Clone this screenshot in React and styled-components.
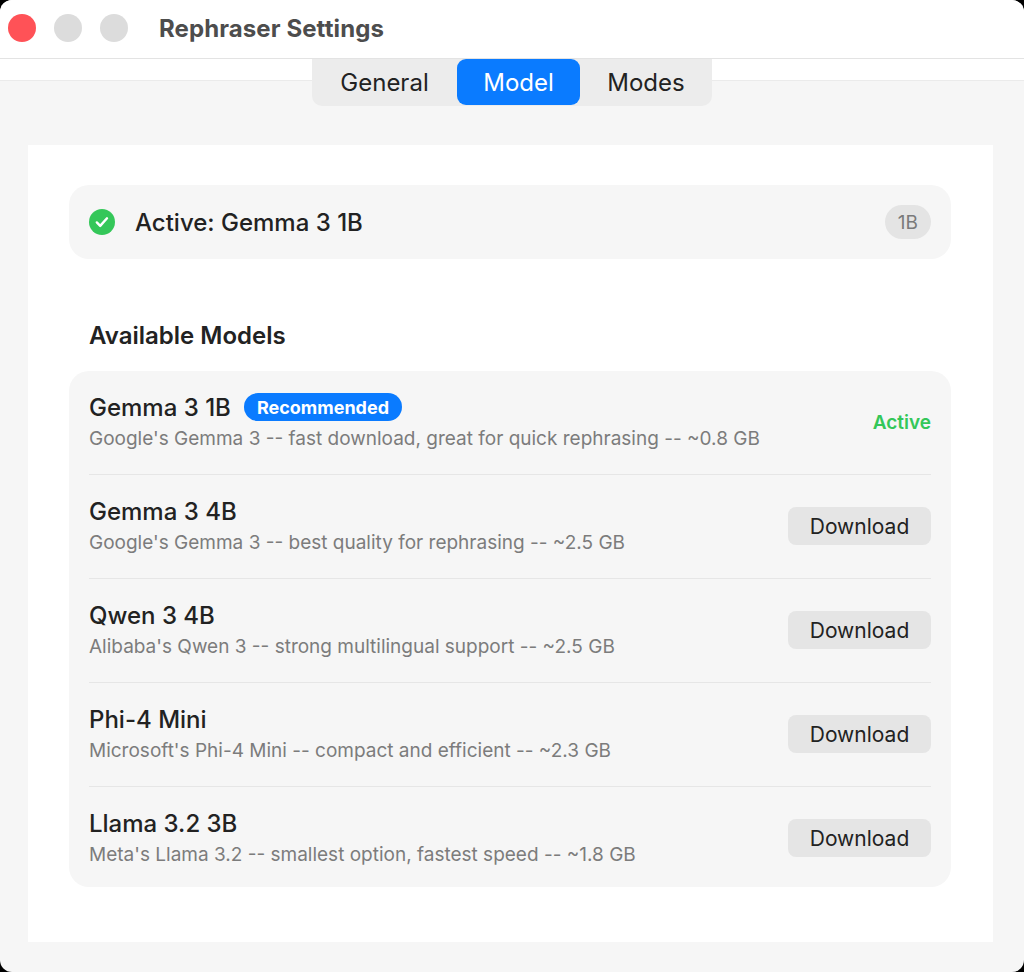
import React from "react";
import styled, { createGlobalStyle } from "styled-components";

const Global = createGlobalStyle`
  html, body { margin: 0; padding: 0; background: #000; }
  body { font-family: Inter, "Noto Sans", "Liberation Sans", sans-serif; -webkit-font-smoothing: antialiased; }
  * { box-sizing: border-box; }
`;

const Window = styled.div`
  width: 1024px;
  height: 972px;
  background: #f6f6f6;
  border-radius: 12px;
  overflow: hidden;
  display: flex;
  flex-direction: column;
`;

const TitleBar = styled.div`
  height: 59px;
  flex: none;
  background: #fff;
  border-bottom: 1px solid #e3e3e3;
  display: flex;
  align-items: center;
  padding: 0 0 2px 8px;
`;

const Lights = styled.div`
  display: flex;
  gap: 18px;
`;

const Light = styled.span`
  width: 28px;
  height: 28px;
  border-radius: 50%;
  background: ${(p) => p.$color};
`;

const Title = styled.div`
  margin-left: 31px;
  font-size: 24px;
  font-weight: 700;
  color: #4d4d4d;
  letter-spacing: 0.1px;
`;

const ToolStrip = styled.div`
  height: 22px;
  flex: none;
  background: #fff;
  border-bottom: 1px solid #ebebeb;
`;

const TabsRow = styled.div`
  display: flex;
  justify-content: center;
  margin-top: -22px;
  padding-left: 0;
`;

const Segmented = styled.div`
  display: flex;
  height: 47px;
  background: #ececec;
  border-radius: 0 0 10px 10px;
  padding-bottom: 1px;
`;

const Tab = styled.div`
  height: 46px;
  display: flex;
  align-items: center;
  justify-content: center;
  width: ${(p) => p.$w}px;
  font-size: 24px;
  font-weight: 400;
  color: ${(p) => (p.$active ? "#fff" : "#222")};
  background: ${(p) => (p.$active ? "#0a7bff" : "transparent")};
  border-radius: 9px;
`;

const Body = styled.div`
  flex: 1;
  padding: 39px 31px 30px 28px;
  display: flex;
`;

const Panel = styled.div`
  flex: 1;
  background: #fff;
  padding: 40px 42px 0 41px;
  display: flex;
  flex-direction: column;
`;

const ActiveCard = styled.div`
  height: 74px;
  background: #f6f6f6;
  border-radius: 20px;
  display: flex;
  align-items: center;
  padding: 0 20px;
  gap: 20px;
`;

const ActiveLabel = styled.div`
  flex: 1;
  font-size: 24px;
  font-weight: 500;
  color: #222;
`;

const SizePill = styled.div`
  height: 34px;
  padding: 0 13px;
  border-radius: 17px;
  background: #e4e4e4;
  color: #7a7a7a;
  font-size: 19px;
  display: flex;
  align-items: center;
`;

const Heading = styled.div`
  margin: 62px 0 20px 20px;
  font-size: 24px;
  line-height: 30px;
  font-weight: 600;
  color: #222;
`;

const ListCard = styled.div`
  background: #f6f6f6;
  border-radius: 20px;
  padding: 0 20px;
`;

const Row = styled.div`
  display: flex;
  align-items: center;
  padding: 20px 0 21px;
  border-top: ${(p) => (p.$first ? "none" : "1px solid #e6e6e6")};
  &:last-child { padding-bottom: 18px; }
`;

const Info = styled.div`
  flex: 1;
  display: flex;
  flex-direction: column;
  gap: 2px;
`;

const NameLine = styled.div`
  display: flex;
  align-items: center;
  gap: 13px;
  height: 32px;
`;

const Name = styled.div`
  font-size: 24px;
  font-weight: 500;
  color: #222;
`;

const Badge = styled.span`
  height: 28px;
  padding: 0 13px;
  border-radius: 14px;
  background: #0a7bff;
  color: #fff;
  font-size: 18px;
  font-weight: 700;
  display: flex;
  align-items: center;
`;

const Desc = styled.div`
  font-size: 19px;
  line-height: 28px;
  color: #7c7c7c;
`;

const ActiveText = styled.div`
  font-size: 19px;
  font-weight: 600;
  color: #34c759;
`;

const DownloadButton = styled.button`
  width: 143px;
  height: 38px;
  border: none;
  border-radius: 8px;
  background: #e5e5e5;
  font-family: inherit;
  font-size: 21px;
  color: #222;
  padding: 0;
`;

const CheckIcon = () => (
  <svg width="26" height="26" viewBox="0 0 26 26">
    <circle cx="13" cy="13" r="13" fill="#34c759" />
    <path d="M7.8 13.4l3.4 3.5 6.8-7.6" fill="none" stroke="#fff" strokeWidth="2.4" strokeLinecap="round" strokeLinejoin="round" />
  </svg>
);

const models = [
  { name: "Gemma 3 1B", desc: "Google's Gemma 3 -- fast download, great for quick rephrasing -- ~0.8 GB", recommended: true, active: true },
  { name: "Gemma 3 4B", desc: "Google's Gemma 3 -- best quality for rephrasing -- ~2.5 GB" },
  { name: "Qwen 3 4B", desc: "Alibaba's Qwen 3 -- strong multilingual support -- ~2.5 GB" },
  { name: "Phi-4 Mini", desc: "Microsoft's Phi-4 Mini -- compact and efficient -- ~2.3 GB" },
  { name: "Llama 3.2 3B", desc: "Meta's Llama 3.2 -- smallest option, fastest speed -- ~1.8 GB" },
];

export default function App() {
  return (
    <>
      <Global />
      <Window>
        <TitleBar>
          <Lights>
            <Light $color="#ff5257" />
            <Light $color="#dcdcdc" />
            <Light $color="#dcdcdc" />
          </Lights>
          <Title>Rephraser Settings</Title>
        </TitleBar>
        <ToolStrip />
        <TabsRow>
          <Segmented>
            <Tab $w={145}>General</Tab>
            <Tab $w={123} $active>Model</Tab>
            <Tab $w={132}>Modes</Tab>
          </Segmented>
        </TabsRow>
        <Body>
          <Panel>
            <ActiveCard>
              <CheckIcon />
              <ActiveLabel>Active: Gemma 3 1B</ActiveLabel>
              <SizePill>1B</SizePill>
            </ActiveCard>
            <Heading>Available Models</Heading>
            <ListCard>
              {models.map((m, i) => (
                <Row key={m.name} $first={i === 0}>
                  <Info>
                    <NameLine>
                      <Name>{m.name}</Name>
                      {m.recommended && <Badge>Recommended</Badge>}
                    </NameLine>
                    <Desc>{m.desc}</Desc>
                  </Info>
                  {m.active ? <ActiveText>Active</ActiveText> : <DownloadButton>Download</DownloadButton>}
                </Row>
              ))}
            </ListCard>
          </Panel>
        </Body>
      </Window>
    </>
  );
}
